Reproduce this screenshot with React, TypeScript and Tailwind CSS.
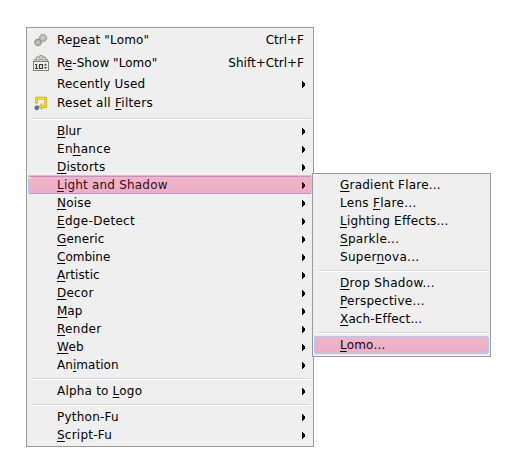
import React from 'react';

type Item = {
  label: string;
  mnemonic?: number;
  shortcut?: string;
  arrow?: boolean;
  height?: string;
  icon?: React.ReactNode;
  tracking?: string;
};

function GearsIcon() {
  return (
    <svg width="16" height="16" viewBox="0 0 16 16" fill="none">
      <circle cx="10" cy="6" r="3.3" fill="#cbccc8" stroke="#989a95" strokeWidth="1" />
      <circle cx="10" cy="6" r="3.9" stroke="#9c9e99" strokeWidth="1" strokeDasharray="1.5 1.6" />
      <circle cx="10" cy="6" r="1.3" fill="#e6e6e4" stroke="#a8aaa5" strokeWidth=".7" />
      <circle cx="5" cy="10.4" r="3" fill="#c4c5c1" stroke="#8b8d88" strokeWidth="1" />
      <circle cx="5" cy="10.4" r="3.6" stroke="#92948f" strokeWidth="1" strokeDasharray="1.4 1.4" />
      <circle cx="5" cy="10.4" r="1.2" fill="#e3e3e0" stroke="#9c9e98" strokeWidth=".7" />
    </svg>
  );
}

function ReshowIcon() {
  return (
    <svg width="16" height="16" viewBox="0 0 16 16" fill="none">
      <path d="M1.5 7V4.5H3.5L2.9 2.8 4.4 1.6 6 2.6 6.8.6H9.2L10 2.6 11.6 1.6 13.1 2.8 12.5 4.5H14.5V7Z" fill="#cbccc8" stroke="#92948e" />
      <path d="M5.3 7C5.3 3.6 10.7 3.6 10.7 7" fill="#efefef" stroke="#92948e" />
      <rect x=".5" y="6.5" width="15" height="9" fill="#f0f0ee" stroke="#80827d" />
      <path d="M2 9.5H3.5V13M2 13.5H5M6.5 9.5H9.5V13.5H6.5Z" stroke="#3a3c38" strokeWidth="1.2" />
      <path d="M11 10.5 12.6 8.4 14.2 10.5ZM11 12 12.6 14.1 14.2 12Z" fill="#454743" />
    </svg>
  );
}

function ResetIcon() {
  return (
    <svg width="16" height="16" viewBox="0 0 16 16" fill="none">
      <path d="M3.6 8.4V3.2H12.7V11.6H9.5" stroke="#c9a60a" strokeWidth="2.8" strokeLinejoin="round" />
      <path d="M9 8.4V14.6L5.8 11.5Z" fill="#f2d42c" stroke="#c9a60a" strokeWidth=".7" strokeLinejoin="round" />
      <path d="M3.6 7.9V3.2H12.7V11.6H8.5" stroke="#f7dc38" strokeWidth="1.5" strokeLinejoin="round" />
      <circle cx="3.8" cy="12.8" r="2" fill="#5580b0" stroke="#3a628f" strokeWidth=".8" />
    </svg>
  );
}

const mainItems: (Item | null)[] = [
  { label: 'Repeat "Lomo"', mnemonic: 2, shortcut: 'Ctrl+F', height: 'h-5 mb-px', icon: <GearsIcon />, tracking: 'tracking-[0.18px]' },
  { label: 'Re-Show "Lomo"', mnemonic: 1, shortcut: 'Shift+Ctrl+F', height: 'h-6', icon: <ReshowIcon />, tracking: 'tracking-[0.05px]' },
  { label: 'Recently Used', arrow: true, tracking: 'tracking-[0.2px]' },
  { label: 'Reset all Filters', mnemonic: 10, height: 'h-5 mb-px', icon: <ResetIcon />, tracking: 'tracking-[0.28px]' },
  null,
  { label: 'Blur', mnemonic: 0, arrow: true },
  { label: 'Enhance', mnemonic: 2, arrow: true, tracking: 'tracking-[0.3px]' },
  { label: 'Distorts', mnemonic: 0, arrow: true, tracking: 'tracking-[0.2px]' },
  { label: 'Light and Shadow', mnemonic: 0, arrow: true, tracking: 'tracking-[0.2px]' },
  { label: 'Noise', mnemonic: 0, arrow: true, tracking: 'tracking-[0.2px]' },
  { label: 'Edge-Detect', mnemonic: 0, arrow: true, tracking: 'tracking-[0.32px]' },
  { label: 'Generic', mnemonic: 0, arrow: true, tracking: 'tracking-[0.14px]' },
  { label: 'Combine', mnemonic: 0, arrow: true },
  { label: 'Artistic', mnemonic: 0, arrow: true, tracking: 'tracking-[0.08px]' },
  { label: 'Decor', mnemonic: 0, arrow: true, tracking: 'tracking-[0.2px]' },
  { label: 'Map', mnemonic: 0, arrow: true },
  { label: 'Render', mnemonic: 0, arrow: true, tracking: 'tracking-[0.3px]' },
  { label: 'Web', mnemonic: 0, arrow: true, tracking: 'tracking-[0.2px]' },
  { label: 'Animation', mnemonic: 2, arrow: true, tracking: 'tracking-[0.05px]' },
  null,
  { label: 'Alpha to Logo', mnemonic: 9, arrow: true, tracking: 'tracking-[0.2px]' },
  null,
  { label: 'Python-Fu', arrow: true, tracking: 'tracking-[0.24px]' },
  { label: 'Script-Fu', mnemonic: 0, arrow: true, tracking: 'tracking-[0.24px]' },
];

const subItems: (Item | null)[] = [
  { label: 'Gradient Flare...', mnemonic: 0, tracking: 'tracking-[0.22px]' },
  { label: 'Lens Flare...', mnemonic: 5, tracking: 'tracking-[0.3px]' },
  { label: 'Lighting Effects...', mnemonic: 0, tracking: 'tracking-[0.2px]' },
  { label: 'Sparkle...', mnemonic: 0, tracking: 'tracking-[0.26px]' },
  { label: 'Supernova...', mnemonic: 5, tracking: 'tracking-[0.3px]' },
  null,
  { label: 'Drop Shadow...', mnemonic: 0, tracking: 'tracking-[0.32px]' },
  { label: 'Perspective...', mnemonic: 0, tracking: 'tracking-[0.27px]' },
  { label: 'Xach-Effect...', mnemonic: 0, tracking: 'tracking-[0.14px]' },
  null,
  { label: 'Lomo...', mnemonic: 0, tracking: 'tracking-[0.2px]' },
];

function Label({ item }: { item: Item }) {
  const m = item.mnemonic;
  if (m === undefined) return <span className={item.tracking}>{item.label}</span>;
  return (
    <span className={item.tracking}>
      {item.label.slice(0, m)}
      <span className="underline decoration-1 underline-offset-2 [text-decoration-skip-ink:none]">{item.label[m]}</span>
      {item.label.slice(m + 1)}
    </span>
  );
}

function Row({ item, active, sub }: { item: Item; active: boolean; sub?: boolean }) {
  const activeStyle = sub
    ? 'rounded-xs border border-[#aecbf5] bg-linear-to-b from-[#f2b4c6] to-[#e8b0c8] text-[#14040b]'
    : 'relative rounded-xs border border-[#bd94c4] border-l-[#b4cdf0] border-r-[#b4cdf0] bg-linear-to-b from-[#f2b4c6] to-[#e8b0c8] shadow-[0_-1px_0_#f2b4c4] text-[#3d0a1c]';
  return (
    <div
      className={`flex items-center whitespace-pre ${item.height ?? 'h-[18px]'} ${sub ? 'pl-[25px]' : 'pl-1 pr-[6px]'} ${
        active ? activeStyle : 'border-x border-transparent text-black'
      }`}
    >
      {active && !sub && <span className="absolute left-0 top-0 h-[2px] w-[2px] bg-[#f4ee9e]" />}
      {!sub && <span className="mr-2 flex w-4 shrink-0">{item.icon}</span>}
      <Label item={item} />
      {item.shortcut && <span className="ml-auto pr-[1px]">{item.shortcut}</span>}
      {item.arrow && (
        <svg className="ml-auto" width="3" height="7" viewBox="0 0 3 7" shapeRendering="crispEdges" fill="currentColor">
          <path d="M0 0H1V1H2V2H3V5H2V6H1V7H0Z" />
        </svg>
      )}
    </div>
  );
}

function Separator() {
  return (
    <div className="ml-1 mr-px h-2 pt-1">
      <div className="h-[2px] border-t border-[#dadada] bg-white" />
    </div>
  );
}

function Menu({ items, activeLabel, sub }: { items: (Item | null)[]; activeLabel: string; sub?: boolean }) {
  return (
    <div className={`border border-[#9b9b9b] bg-[#efefef] px-px py-[2px] ${sub ? 'w-[179px]' : 'w-[288px]'}`}>
      {items.map((item, i) =>
        item ? <Row key={i} item={item} active={item.label === activeLabel} sub={sub} /> : <Separator key={i} />
      )}
    </div>
  );
}

export default function App() {
  return (
    <div className="relative h-[469px] w-[519px] overflow-hidden bg-white pl-[26px] pt-[27px] font-['DejaVu_Sans',sans-serif] text-[12px] leading-[18px]">
      <Menu items={mainItems} activeLabel="Light and Shadow" />
      <div className="absolute left-[312px] top-[173px]">
        <Menu items={subItems} activeLabel="Lomo..." sub />
      </div>
    </div>
  );
}
